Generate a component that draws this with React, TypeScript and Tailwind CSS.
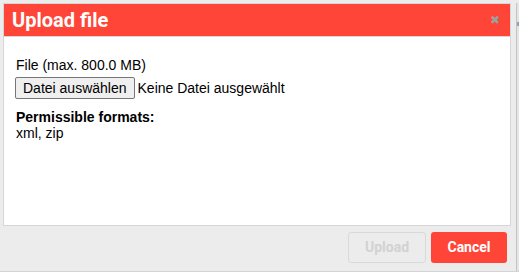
import React from "react";

export default function App() {
  return (
    <div className="w-[519px] h-[272px] bg-[#ececec] flex flex-col overflow-hidden">
      <div className="flex flex-1 pt-[3px] pl-[3px]">
        <div className="w-[508px] flex flex-col">
          <div className="border border-[#d6d6d6] border-b-0 flex flex-col">
            <div className="h-[33px] bg-[#ff4538] flex items-center justify-between pl-[8px] pr-[10px] border-b border-[#d6d6d6]">
              <span className="text-white font-bold text-[20px] leading-none font-['Roboto',sans-serif] pb-[1px]">
                Upload file
              </span>
              <span className="text-[#9e9e9e] font-bold text-[12px] leading-none font-['DejaVu_Sans',sans-serif]">
                ✖
              </span>
            </div>
            <div className="h-[189px] bg-white pl-[12px] pt-[20px] font-['Liberation_Sans',Arial,sans-serif] text-[14px] text-black leading-[16px] border-b border-[#d6d6d6]">
              <div>File (max. 800.0 MB)</div>
              <div className="flex items-center mt-[4px] -ml-[1px]">
                <div className="h-[22px] px-[7px] flex items-center bg-[#efefef] border border-[#767676] rounded-[2px]">
                  Datei auswählen
                </div>
                <span className="ml-[3px]">Keine Datei ausgewählt</span>
              </div>
              <div className="font-bold mt-[10px]">Permissible formats:</div>
              <div>xml, zip</div>
            </div>
          </div>
          <div className="flex justify-end gap-[5px] pt-[6px] pr-[4px] font-['Roboto',sans-serif] font-bold text-[14px]">
            <div className="w-[78px] h-[31px] flex items-center justify-center border border-[#d9d9d9] rounded-[3px] text-[#d2d2d2]">
              Upload
            </div>
            <div className="w-[76px] h-[31px] flex items-center justify-center bg-[#ff4538] rounded-[3px] text-white">
              Cancel
            </div>
          </div>
        </div>
        <div className="flex-1 flex">
          <div className="w-[5px]" />
          <div className="w-[1px] bg-[#c4c4c4] relative">
            <div className="absolute top-[19px] left-[1px] w-[2px] h-[4px] bg-[#8ea2b8]" />
          </div>
          <div className="flex-1 bg-[#e4e4e4]" />
        </div>
      </div>
      <div className="h-[1px] bg-[#d4d4d4]" />
    </div>
  );
}
